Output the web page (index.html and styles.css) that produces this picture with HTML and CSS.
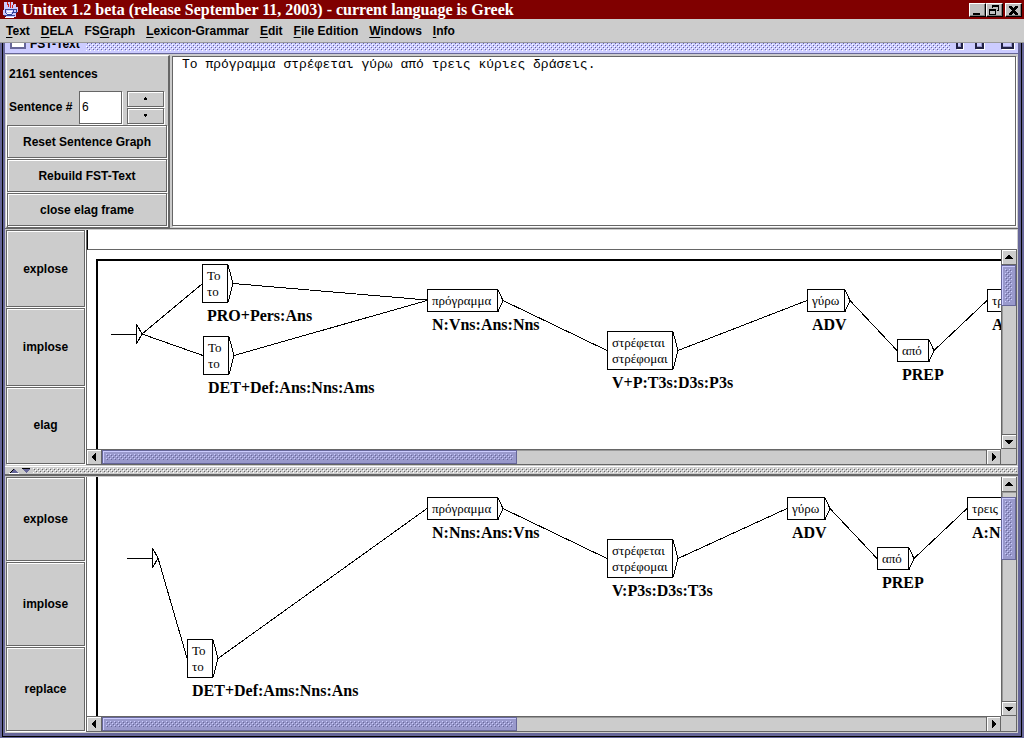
FILE: index.html
```
<!DOCTYPE html>
<html lang="en">
<head>
<meta charset="utf-8">
<title>Unitex 1.2 beta</title>
<link rel="stylesheet" href="styles.css">
</head>
<body>
<header class="titlebar">
  <svg class="logo" width="17" height="17" viewBox="0 0 17 17" aria-hidden="true">
    <path d="M2 1h9v2h3v3h2v5h-2v5H4v-2H1V9h1z" fill="#ccccff"/>
    <path d="M6 1c-2 2 2 3 0 5M9 1c-3 2 2 3-1 6M12 3c-2 1-1 2-2 4" fill="none" stroke="#d02020"/>
    <path d="M3 8h8v3l-1 2H5L3 11zM11 8h3v3h-3M2 14h11" fill="none" stroke="#334499"/>
    <path d="M5 10h5M5 12h4M3 16h9" stroke="#fff" fill="none"/>
  </svg>
  <h1 class="title">Unitex 1.2 beta (release September 11, 2003) - current language is Greek</h1>
  <div class="window-buttons">
    <button class="win" aria-label="Minimize"><svg width="14" height="12"><path d="M3 9h7v2H3z"/></svg></button>
    <button class="win" aria-label="Restore"><svg width="14" height="12"><path d="M5 1h7v6h-2V6h1V3H6v1H5zM2 5h7v6H2zM3 7v3h5V7z" fill-rule="evenodd"/></svg></button>
    <button class="win close" aria-label="Close"><svg width="14" height="12"><path d="M3 2h2v1h1v1h2V3h1V2h2v1h-1v1H9v1H8v2h1v1h1v1h1v1H9V9H8V8H6v1H5v1H3V9h1V8h1V7h1V5H5V4H4V3H3z" stroke="#000"/></svg></button>
  </div>
</header>
<nav class="menubar">
  <button><u>T</u>ext</button>
  <button><u>D</u>ELA</button>
  <button>FS<u>G</u>raph</button>
  <button><u>L</u>exicon-Grammar</button>
  <button><u>E</u>dit</button>
  <button><u>F</u>ile Edition</button>
  <button><u>W</u>indows</button>
  <button><u>I</u>nfo</button>
</nav>
<main class="frame">
  <div class="frame-edge">
  <div class="frame-title">
    <span class="frame-icon"></span>
    <h2>FST-Text</h2>
    <span class="bumps title-bumps"></span>
    <span class="frame-control small"></span>
    <span class="frame-control medium"></span>
    <span class="frame-control large"></span>
  </div>
  <section class="top">
    <form class="controls">
      <p class="count">2161 sentences</p>
      <div class="sentence">
        <label for="number">Sentence #</label>
        <input id="number" type="text" value="6">
        <div class="spinner">
          <button type="button" class="metal" aria-label="Next sentence"><svg width="5" height="4"><path d="M2 0h1v1h1v2H1V1h1z"/></svg></button>
          <button type="button" class="metal" aria-label="Previous sentence"><svg width="5" height="4"><path d="M1 0h3v2H3v1H2V2H1z"/></svg></button>
        </div>
      </div>
      <div class="actions">
        <button type="button" class="metal">Reset Sentence Graph</button>
        <button type="button" class="metal">Rebuild FST-Text</button>
        <button type="button" class="metal">close elag frame</button>
      </div>
    </form>
    <textarea class="sentence-text" aria-label="Sentence" lang="el">Το πρόγραμμα στρέφεται γύρω από τρεις κύριες δράσεις.</textarea>
  </section>

  <section class="work upper">
    <div class="side">
      <button class="metal">explose</button>
      <button class="metal">implose</button>
      <button class="metal">elag</button>
    </div>
    <div class="view">
      <input class="rule" type="text" aria-label="Elag rule">
      <div class="scroll">
        <div class="canvas">
          <svg width="1200" height="600" viewBox="86 250 1200 600">
            <g class="lines">
              <path class="page" d="M1286 260H96V850"/>
              <path d="M110 334.500H135M135.500 324V344L141 334L135.500 324M141 334L201 284M141 334L202 355.500"/>
              <path d="M201.500 264.500h25v38h-25zM227 265l5 18.500l-5 19M232 283.500L426 300"/>
              <path d="M202.500 336.500h25v38h-25zM228 337l5 18.500l-5 19M233 355.500L426 300.500"/>
              <path d="M426.500 289.500h70v22h-70zM497 290l5 10.500l-5 11M502 300.500L606 350.500"/>
              <path d="M606.500 331.500h65v38h-65zM672 332l5 18.500l-5 19M677 350.500L806 300.500"/>
              <path d="M806.500 289.500h37v22h-37zM844 290l5 10.500l-5 11M849 300.500L896 350.500"/>
              <path d="M896.500 339.500h31v22h-31zM928 340l5 10.500l-5 11M933 350.500L986 300.500"/>
              <path d="M986.500 289.500h35v22h-35z"/>
            </g>
            <g class="word">
              <text x="206" y="280">Το</text><text x="206" y="296">το</text>
              <text x="207" y="352">Το</text><text x="207" y="368">το</text>
              <text x="431" y="305">πρόγραμμα</text>
              <text x="611" y="347">στρέφεται</text><text x="611" y="363">στρέφομαι</text>
              <text x="811" y="305">γύρω</text>
              <text x="901" y="355">από</text>
              <text x="991" y="305">τρεις</text>
            </g>
            <g class="tag">
              <text x="206" y="321">PRO+Pers:Ans</text>
              <text x="207" y="393">DET+Def:Ans:Nns:Ams</text>
              <text x="431" y="330">N:Vns:Ans:Nns</text>
              <text x="611" y="388">V+P:T3s:D3s:P3s</text>
              <text x="811" y="330">ADV</text>
              <text x="901" y="380">PREP</text>
              <text x="991" y="330">A:Nns</text>
            </g>
          </svg>
        </div>
        <div class="bar vertical">
          <button class="arrow" aria-label="Scroll up"><svg width="8" height="4"><path d="M3 0h2v1h1v1h1v1h1v1H0V3h1V2h1V1h1z"/></svg></button>
          <div class="track"><div class="thumb first"><span class="bumps"></span></div></div>
          <button class="arrow" aria-label="Scroll down"><svg width="8" height="4"><path d="M0 0h8v1H7v1H6v1H5v1H3V3H2V2H1V1H0z"/></svg></button>
        </div>
        <div class="bar horizontal">
          <button class="arrow" aria-label="Scroll left"><svg width="4" height="8"><path d="M4 0v8H3V7H2V6H1V5H0V3h1V2h1V1h1V0z"/></svg></button>
          <div class="track"><div class="thumb wide"><span class="bumps"></span></div></div>
          <button class="arrow" aria-label="Scroll right"><svg width="4" height="8"><path d="M0 0h1v1h1v1h1v1h1v2H3v1H2v1H1v1H0z"/></svg></button>
        </div>
        <div class="corner"></div>
      </div>
    </div>
  </section>

  <div class="divider">
    <svg width="24" height="6" aria-hidden="true"><path d="M1 5l4-4 4 4zM13 1h8l-4 4z" fill="#666699"/><path d="M0 5.500h10" stroke="#fff"/><path d="M1 5l4-4M13 .500h8" stroke="#000" fill="none"/></svg>
    <span class="bumps"></span>
  </div>

  <section class="work lower">
    <div class="side">
      <button class="metal">explose</button>
      <button class="metal">implose</button>
      <button class="metal">replace</button>
    </div>
    <div class="view">
      <div class="scroll">
        <div class="canvas">
          <svg width="1200" height="600" viewBox="86 477 1200 600">
            <g class="lines">
              <path class="page" d="M96 470V1077"/>
              <path d="M126 558.500H151M151.500 548V568L157 558L151.500 548M157 558L186 658"/>
              <path d="M186.500 639.500h25v38h-25zM212 640l5 18.500l-5 19M217 658.500L426 508.500"/>
              <path d="M426.500 497.500h70v22h-70zM497 498l5 10.500l-5 11M502 508.500L606 558.500"/>
              <path d="M606.500 539.500h65v38h-65zM672 540l5 18.500l-5 19M677 558.500L786 508.500"/>
              <path d="M786.500 497.500h37v22h-37zM824 498l5 10.500l-5 11M829 508.500L876 558.500"/>
              <path d="M876.500 547.500h31v22h-31zM908 548l5 10.500l-5 11M913 558.500L966 508.500"/>
              <path d="M966.500 497.500h36v22h-36z"/>
            </g>
            <g class="word">
              <text x="191" y="655">Το</text><text x="191" y="671">το</text>
              <text x="431" y="513">πρόγραμμα</text>
              <text x="611" y="555">στρέφεται</text><text x="611" y="571">στρέφομαι</text>
              <text x="791" y="513">γύρω</text>
              <text x="881" y="563">από</text>
              <text x="971" y="513">τρεις</text>
            </g>
            <g class="tag">
              <text x="191" y="696">DET+Def:Ams:Nns:Ans</text>
              <text x="431" y="538">N:Nns:Ans:Vns</text>
              <text x="611" y="596">V:P3s:D3s:T3s</text>
              <text x="791" y="538">ADV</text>
              <text x="881" y="588">PREP</text>
              <text x="971" y="538">A:Nns</text>
            </g>
          </svg>
        </div>
        <div class="bar vertical">
          <button class="arrow" aria-label="Scroll up"><svg width="8" height="4"><path d="M3 0h2v1h1v1h1v1h1v1H0V3h1V2h1V1h1z"/></svg></button>
          <div class="track"><div class="thumb second"><span class="bumps"></span></div></div>
          <button class="arrow" aria-label="Scroll down"><svg width="8" height="4"><path d="M0 0h8v1H7v1H6v1H5v1H3V3H2V2H1V1H0z"/></svg></button>
        </div>
        <div class="bar horizontal">
          <button class="arrow" aria-label="Scroll left"><svg width="4" height="8"><path d="M4 0v8H3V7H2V6H1V5H0V3h1V2h1V1h1V0z"/></svg></button>
          <div class="track"><div class="thumb wide"><span class="bumps"></span></div></div>
          <button class="arrow" aria-label="Scroll right"><svg width="4" height="8"><path d="M0 0h1v1h1v1h1v1h1v2H3v1H2v1H1v1H0z"/></svg></button>
        </div>
        <div class="corner"></div>
      </div>
    </div>
  </section>
  </div>
</main>
</body>
</html>
```
FILE: styles.css
```
* { box-sizing: border-box; }
body {
  margin: 0;
  height: 100vh;
  min-height: 560px;
  display: flex;
  flex-direction: column;
  background: #cccccc;
  color: #000;
  font: bold 12px/16px "Liberation Sans", Arial, sans-serif;
  overflow: hidden;
}
button, input, textarea { font: inherit; color: inherit; margin: 0; padding: 0; border-radius: 0; outline: 0; }
button { border: 0; background: #cccccc; }
svg { display: block; shape-rendering: crispEdges; flex: none; }

.titlebar { display: flex; align-items: center; height: 19px; flex: none; padding: 0 2px; background: #800000; }
.title { flex: 1; margin: 0 0 0 3px; color: #fff; font: bold 16px/19px "Liberation Serif", "Times New Roman", serif; white-space: nowrap; }
.window-buttons { display: flex; }
.win { display: flex; width: 17px; height: 14px; border: 1px solid; border-color: #fff #000 #000 #fff; box-shadow: inset -1px -1px #808080; background: #c0c0c0; }
.close { margin-left: 2px; }

.menubar { display: flex; gap: 11px; height: 24px; flex: none; padding: 0 6px; border-bottom: 1px solid #999; }
.menubar button { line-height: 24px; white-space: nowrap; }
.menubar u { text-underline-offset: 2px; text-decoration-thickness: 1px; }

.frame { flex: 1; min-height: 0; display: flex; background: #666699; padding: 0 2px 1px 2px; }
.frame-edge { flex: 1; min-width: 0; display: flex; flex-direction: column; border: solid #000; border-width: 0 1px 1px; padding: 0 3px 3px 2px; background: #666699; }
.frame-title { display: flex; align-items: flex-end; height: 11px; flex: none; overflow: hidden; padding: 0 4px 4px 5px; background: #ccccff; border-bottom: 1px solid #666699; }
.frame-title h2 { margin: 0 6px -3px 4px; font: inherit; }
.frame-icon { width: 16px; height: 12px; background: #fff; border: 2px solid #666699; flex: none; }
.frame-control { height: 12px; flex: none; border: 2px solid #222244; background: #ccccff; box-shadow: 1px 1px #fff, inset -1px -1px #9999cc; }
.small { width: 7px; }
.medium { width: 9px; margin-left: 12px; }
.large { width: 13px; margin-left: 17px; }
.bumps {
  --light: #fff;
  --dark: #666699;
  display: block;
  flex: 1;
  background-image:
    conic-gradient(at 1px 1px, transparent 75%, var(--light) 0),
    conic-gradient(at 1px 1px, transparent 75%, var(--light) 0),
    conic-gradient(at 1px 1px, transparent 75%, var(--dark) 0),
    conic-gradient(at 1px 1px, transparent 75%, var(--dark) 0);
  background-size: 4px 4px;
  background-position: 0 0, 2px 2px, 1px 1px, 3px 3px;
}
.title-bumps { height: 9px; margin: 0 6px -2px 0; }

.top { display: flex; flex: none; height: 174px; padding: 1px 1px 0; background: #cccccc; }
.controls { display: flex; flex-direction: column; width: 164px; flex: none; border: solid; border-width: 1px 2px 2px 1px; border-color: #fff #666 #666 #fff; padding: 0 1px 0 0; }
.count { margin: 10px 2px 8px; }
.sentence { display: flex; align-items: center; gap: 5px; height: 34px; padding-left: 2px; }
.sentence label { white-space: nowrap; width: 65px; }
.sentence input { width: 43px; height: 33px; padding: 0 2px; border: 1px solid #666; background: #fff; box-shadow: 1px 1px #fff; font-weight: normal; }
.spinner { display: grid; gap: 1px; width: 37px; }
.spinner .metal { height: 16px; }
.metal { display: flex; align-items: center; justify-content: center; border: 1px solid #666; box-shadow: inset 1px 1px #fff, 1px 1px #fff; }
.actions { display: grid; gap: 1px; margin-top: auto; }
.actions .metal { height: 33px; padding-top: 1px; }
.sentence-text { flex: 1; min-width: 0; margin: 1px 1px 2px 2px; padding: 0 9px; border: 1px solid #666; background: #fff; box-shadow: 1px 1px #fff; resize: none; font: 13px/16px "Liberation Mono", "Courier New", monospace; }

.work { display: flex; min-height: 0; padding: 1px 1px 1px 0; border-top: 1px solid #666; background: #cccccc; }
.upper { flex: 238 1 0; }
.lower { flex: 258 1 0; }
.side { display: grid; grid-auto-rows: 1fr; gap: 1px; width: 79px; flex: none; margin-left: 1px; padding-bottom: 1px; }
.view { flex: 1; min-width: 0; display: flex; flex-direction: column; margin-left: 1px; border-left: 1px solid #666; box-shadow: -1px 0 #fff; }
.rule { flex: none; width: 100%; height: 20px; border: 0; border-bottom: 1px solid #666; border-left: 1px solid #000; background: #fff; }
.scroll { flex: 1; min-height: 0; display: grid; grid-template-columns: minmax(0, 1fr) 16px; grid-template-rows: minmax(0, 1fr) 16px; }
.canvas { overflow: hidden; background: #fff; }
.lines { fill: none; stroke: #000; stroke-width: 1px; }
.page { stroke-width: 2px; }
.word { font: 13px "Liberation Serif", "Times New Roman", serif; }
.tag { font: bold 16px "Liberation Serif", "Times New Roman", serif; }

.bar { display: flex; min-width: 0; min-height: 0; background: #cccccc; border: 1px solid #666; }
.vertical { flex-direction: column; border-top: 0; border-bottom: 0; }
.horizontal { border-left: 0; border-right: 0; }
.track { flex: 1; min-width: 0; min-height: 0; box-shadow: inset 1px 1px #999; }
.arrow { display: flex; flex: none; align-items: center; justify-content: center; width: 14px; height: 14px; box-shadow: inset 1px 1px #fff; }
.vertical .arrow { height: 15px; border-bottom: 1px solid #666; }
.vertical .arrow:last-child { border-top: 1px solid #666; }
.horizontal .arrow { width: 15px; border-right: 1px solid #666; }
.horizontal .arrow:last-child { border-left: 1px solid #666; }
.thumb { display: flex; background: #9999cc; border: 1px solid #666699; box-shadow: inset 1px 1px #ccccff; padding: 3px; }
.thumb .bumps { --light: #ccccff; }
.first { height: 24%; }
.second { height: 30%; margin-top: 5px; }
.wide { width: 47%; height: 14px; }
.vertical .thumb { margin-left: -1px; }
.corner { border: solid #666; border-width: 0 1px 1px 0; background: #cccccc; }

.divider { display: flex; flex: none; align-items: center; height: 9px; padding: 1px 1px 1px 4px; border: solid; border-width: 1px 0; border-color: #fff #999 #666; background: #cccccc; }
.divider .bumps { --dark: #666; height: 5px; }
```
